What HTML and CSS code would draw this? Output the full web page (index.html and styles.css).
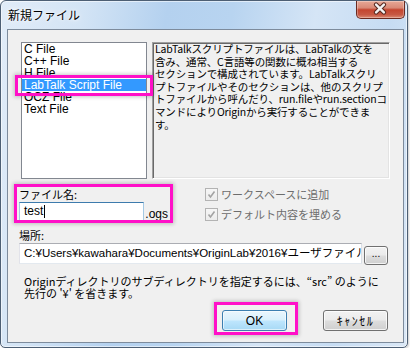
FILE: index.html
```html
<!DOCTYPE html>
<html lang="ja">
<head>
<meta charset="utf-8">
<title>新規ファイル</title>
<link rel="stylesheet" href="styles.css">
</head>
<body>
<div class="window">
  <div class="titlebar">
    <span class="title">新規ファイル</span>
    <div class="close">
      <svg width="49" height="18" viewBox="0 0 49 18">
        <path d="M20.5 4.5 L28.5 12.5 M28.5 4.5 L20.5 12.5" stroke="#5a2a22" stroke-width="4.6" stroke-linecap="round" fill="none"/>
        <path d="M20.5 4.5 L28.5 12.5 M28.5 4.5 L20.5 12.5" stroke="#f4f4f4" stroke-width="2.4" stroke-linecap="round" fill="none"/>
      </svg>
    </div>
  </div>
  <div class="client">
    <div class="top-row">
      <ul class="list">
        <li>C File</li>
        <li>C++ File</li>
        <li>H File</li>
        <li class="sel hl">LabTalk Script File</li>
        <li>OCZ File</li>
        <li>Text File</li>
      </ul>
      <div class="desc">LabTalkスクリプトファイルは、LabTalkの文を<br>含み、通常、C言語等の関数に概ね相当する<br>セクションで構成されています。LabTalkスクリ<br>プトファイルやそのセクションは、他のスクリプ<br>トファイルから呼んだり、run.fileやrun.sectionコ<br>マンドによりOriginから実行することができま<br>す。</div>
    </div>
    <div class="file-row">
      <div class="fname hl">
        <div class="label">ファイル名:</div>
        <div class="fname-input">
          <div class="textbox focus">test<span class="caret"></span></div>
          <span class="ext">.ogs</span>
        </div>
      </div>
      <div class="checks">
        <div class="check"><span class="box"><svg width="11" height="11" viewBox="0 0 11 11"><path d="M2.5 5.5 L4.5 8 L8.5 2.5" stroke="#a3a3a3" stroke-width="1.6" fill="none"/></svg></span>ワークスペースに追加</div>
        <div class="check"><span class="box"><svg width="11" height="11" viewBox="0 0 11 11"><path d="M2.5 5.5 L4.5 8 L8.5 2.5" stroke="#a3a3a3" stroke-width="1.6" fill="none"/></svg></span>デフォルト内容を埋める</div>
      </div>
    </div>
    <div class="label loc">場所:</div>
    <div class="path-row">
      <div class="textbox path">C:¥Users¥kawahara¥Documents¥OriginLab¥2016¥ユーザファイル¥</div>
      <div class="btn small">...</div>
    </div>
    <p class="note">Originディレクトリのサブディレクトリを指定するには、“src” のように<br>先行の '¥' を省きます。</p>
    <div class="buttons">
      <div class="btn default hl-ok">OK</div>
      <div class="btn cancel">ｷｬﾝｾﾙ</div>
    </div>
  </div>
</div>
</body>
</html>
```
FILE: styles.css
```css
html, body {
  margin: 0;
  padding: 0;
  background: #ffffff;
}

body {
  font-family: "Noto Sans CJK JP", "Liberation Sans", sans-serif;
  color: #000;
}

.window {
  width: 408px;
  height: 348px;
  box-sizing: border-box;
  border: 1px solid #4d5f74;
  border-radius: 6px 6px 5px 5px;
  padding: 0 3px 4px 6px;
  display: flex;
  flex-direction: column;
  background: linear-gradient(100deg, #e1ecf8 0%, #d3e4f5 18%, #b4d1ef 36%, #b8d4f0 50%, #d5e5f6 68%, #c6dcf3 84%, #dbe8f6 100%);
  box-shadow: inset 0 0 0 1px rgba(255, 255, 255, 0.55), 1px 1px 2px rgba(0, 0, 0, 0.2);
}

.titlebar {
  height: 28px;
  flex: none;
  display: flex;
  justify-content: space-between;
  align-items: flex-start;
}

.title {
  font-size: 12px;
  line-height: 14px;
  margin: 7px 0 0 1px;
  text-shadow: 0 0 6px #fff, 0 0 3px #fff;
}

.close {
  width: 49px;
  height: 18px;
  margin-right: -1px;
  box-sizing: border-box;
  border: 1px solid #6b2a20;
  border-top: none;
  border-radius: 0 0 5px 5px;
  background: linear-gradient(#e7a896 0%, #d98a77 40%, #c4452f 52%, #c75843 80%, #dc8a72 100%);
  box-shadow: inset 0 0 0 1px rgba(255, 255, 255, 0.3);
  display: flex;
  align-items: center;
  justify-content: center;
}

.close svg {
  display: block;
  margin-left: -1px;
  margin-top: -1px;
}

.client {
  flex: 1;
  border: 1px solid #7d8b9c;
  background: #f0f0f0;
  padding: 12px 13px 0 13px;
  display: flex;
  flex-direction: column;
}

.top-row {
  display: flex;
  gap: 5px;
  height: 137px;
  flex: none;
}

.list {
  width: 126px;
  height: 137px;
  box-sizing: border-box;
  margin: 0;
  padding: 0;
  list-style: none;
  border: 1px solid #828790;
  background: #fff;
  font-family: "Liberation Sans", sans-serif;
  font-size: 12px;
  line-height: 12px;
}

.list li {
  height: 12px;
  padding-left: 2px;
  white-space: nowrap;
}

.list li.sel {
  background: #3399ff;
  color: #fff;
}

.hl,
.hl-ok {
  position: relative;
}

.hl::after,
.hl-ok::after {
  content: "";
  position: absolute;
  border: 3px solid #ff10c8;
  box-shadow: 0 0 4px 1px rgba(0, 0, 0, 0.22);
  z-index: 5;
  pointer-events: none;
}

.list li.hl::after {
  top: -4px;
  left: -7px;
  right: -7px;
  bottom: -5px;
}

.desc {
  width: 238px;
  height: 137px;
  box-sizing: border-box;
  border: 1px solid;
  border-color: #a0a0a0 #ffffff #ffffff #a0a0a0;
  box-shadow: inset 1px 1px 0 #696969, inset -1px -1px 0 #e3e3e3;
  padding: 0 0 0 2px;
  font-size: 10.5px;
  line-height: 12.6px;
  letter-spacing: -0.15px;
  white-space: nowrap;
  overflow: hidden;
}

.label {
  font-size: 11px;
  line-height: 13px;
  height: 13px;
}

.file-row {
  display: flex;
  margin-top: 9px;
  flex: none;
}

.fname {
  width: 149px;
  margin-left: -2px;
}

.fname.hl::after {
  top: -4px;
  left: -5px;
  right: -5px;
  bottom: -2px;
}

.fname-input {
  display: flex;
  align-items: flex-end;
  margin-top: 1px;
}

.textbox {
  box-sizing: border-box;
  background: #fff;
  font-family: "Liberation Sans", "Noto Sans CJK JP", sans-serif;
  font-size: 12px;
  white-space: nowrap;
  overflow: hidden;
}

.textbox.focus {
  width: 126px;
  height: 19px;
  border: 1px solid;
  border-color: #3d7bad #a4c9e3 #b7d9ed #a4c9e3;
  line-height: 17px;
  padding-left: 4px;
  display: flex;
  align-items: center;
}

.caret {
  display: inline-block;
  width: 1px;
  height: 13px;
  background: #000;
  margin-left: 1px;
}

.ext {
  font-family: "Liberation Sans", sans-serif;
  font-size: 12px;
  line-height: 13px;
  margin-left: 1px;
}

.checks {
  margin-left: 37px;
  display: flex;
  flex-direction: column;
  gap: 7px;
}

.check {
  display: flex;
  align-items: center;
  gap: 3px;
  height: 13px;
  font-size: 11px;
  line-height: 13px;
  color: #6d6d6d;
}

.box {
  width: 13px;
  height: 13px;
  box-sizing: border-box;
  border: 1px solid #b3b3b3;
  background: linear-gradient(#f6f6f6, #ececec);
  display: flex;
  align-items: center;
  justify-content: center;
}

.box svg {
  display: block;
}

.loc {
  margin-top: 8px;
  margin-left: -2px;
}

.path-row {
  display: flex;
  align-items: flex-start;
  margin-top: 1px;
  margin-left: -2px;
  flex: none;
}

.textbox.path {
  width: 343px;
  height: 21px;
  border: 1px solid;
  border-color: #abadb3 #dbdfe6 #e3e9ef #e2e3ea;
  font-size: 11.5px;
  line-height: 19px;
  padding-left: 4px;
}

.btn {
  width: 65px;
  height: 21px;
  box-sizing: border-box;
  border: 1px solid #707070;
  border-radius: 3px;
  background: linear-gradient(#f2f2f2 0%, #ebebeb 48%, #dddddd 52%, #cfcfcf 100%);
  box-shadow: inset 0 0 0 1px rgba(255, 255, 255, 0.75);
  display: flex;
  align-items: center;
  justify-content: center;
  font-family: "Liberation Sans", "Noto Sans CJK JP", sans-serif;
  font-size: 12px;
  line-height: 14px;
}

.btn.small {
  width: 24px;
  height: 19px;
  margin-top: 3px;
  margin-left: 2px;
  font-size: 10px;
  align-items: flex-end;
  padding-bottom: 3px;
}

.note {
  margin: 10px 0 0 3px;
  font-size: 11px;
  line-height: 12px;
  white-space: nowrap;
}

.buttons {
  display: flex;
  justify-content: flex-end;
  gap: 36px;
  margin-top: 11px;
  margin-right: 2px;
  flex: none;
}

.btn.default {
  border-color: #3c7fb1;
  background: linear-gradient(#eaf6fd 0%, #d9f0fc 48%, #bee6fd 52%, #a7d9f5 100%);
  box-shadow: inset 0 0 0 1px rgba(255, 255, 255, 0.6);
}

.hl-ok::after {
  top: -9px;
  left: -9px;
  right: -12px;
  bottom: -5px;
}

.btn.cancel {
  font-family: "Noto Sans CJK JP", sans-serif;
  letter-spacing: 1.5px;
}
```
